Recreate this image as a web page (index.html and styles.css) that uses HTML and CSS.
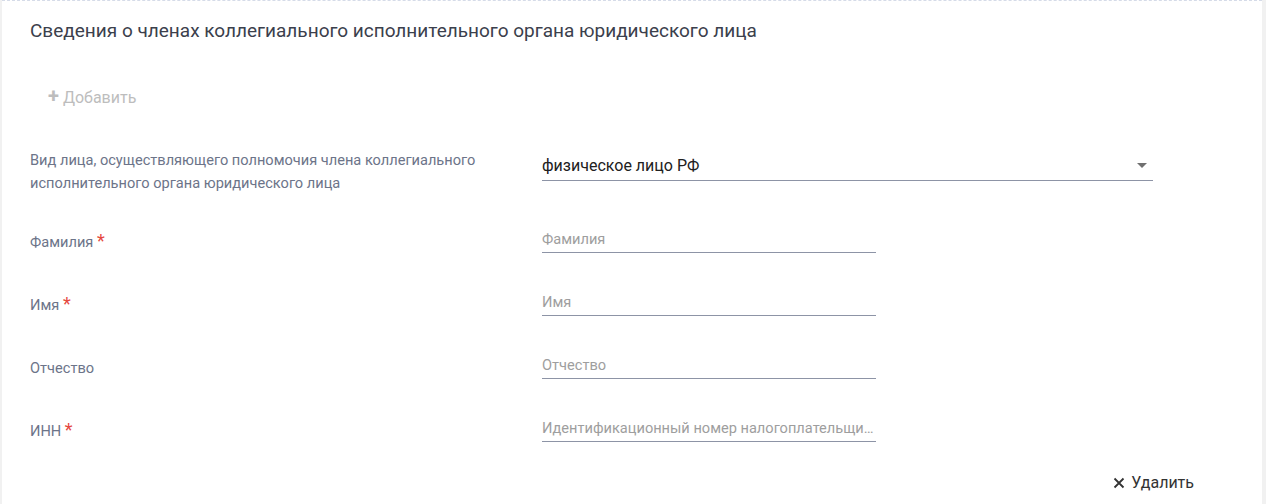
FILE: index.html
```html
<!DOCTYPE html>
<html lang="ru">

<head>
    <meta charset="UTF-8">
    <meta name="viewport" content="width=device-width, initial-scale=1.0">
    <title>Сведения о членах</title>
    <link rel="stylesheet" href="styles.css">
</head>

<body>
    <div class="card">
        <h2 class="title">Сведения о членах коллегиального исполнительного органа юридического лица</h2>

        <div class="add"><span class="add-plus">+</span> Добавить</div>

        <div class="form">
            <div class="row row-first">
                <div class="label">Вид лица, осуществляющего полномочия члена коллегиального исполнительного органа юридического лица</div>
                <div class="field select">
                    <span class="value">физическое лицо РФ</span>
                    <span class="arrow"></span>
                </div>
            </div>
            <div class="row">
                <div class="label">Фамилия <span class="req">*</span></div>
                <div class="field input"><span class="ph">Фамилия</span></div>
            </div>
            <div class="row">
                <div class="label">Имя <span class="req">*</span></div>
                <div class="field input"><span class="ph">Имя</span></div>
            </div>
            <div class="row">
                <div class="label">Отчество</div>
                <div class="field input"><span class="ph">Отчество</span></div>
            </div>
            <div class="row">
                <div class="label">ИНН <span class="req">*</span></div>
                <div class="field input"><span class="ph">Идентификационный номер налогоплательщика физического лица</span></div>
            </div>
        </div>

        <div class="footer">
            <div class="remove">
                <svg class="remove-x" width="12" height="12" viewBox="0 0 12 12"><path d="M1.5 1.5L10.5 10.5M10.5 1.5L1.5 10.5" stroke="#333" stroke-width="1.8" fill="none"/></svg>
                Удалить
            </div>
        </div>
    </div>
</body>

</html>
```

FILE: styles.css
```css
* {
    padding: 0;
    margin: 0;
    box-sizing: border-box;
}

body {
    background: #f1f1f1;
    font-family: Roboto, "Liberation Sans", Arial, sans-serif;
    padding-left: 2px;
    padding-right: 4px;
}

.card {
    background: #fff;
    border-top: 1px dashed #d5dbe8;
    height: 504px;
    padding: 18px 0 0 28px;
}

.title {
    font-size: 19px;
    font-weight: 400;
    line-height: 24px;
    color: #3b404c;
}

.add {
    margin-top: 43px;
    padding-left: 18px;
    font-size: 16px;
    line-height: 20px;
    color: #bdbdbd;
}

.add-plus {
    font-weight: 700;
    font-size: 20px;
}

.form {
    margin-top: 40px;
}

.row {
    display: flex;
    align-items: center;
    height: 63px;
}

.row-first {
    height: 47px;
    margin-bottom: 16px;
}

.label {
    width: 512px;
    padding-right: 30px;
    font-size: 14.6px;
    line-height: 23px;
    color: #6c7489;
}

.req {
    color: #e5483f;
    font-size: 18px;
    line-height: 16px;
}

.field {
    display: flex;
    align-items: center;
    border-bottom: 1px solid #8d94a6;
    font-size: 14.6px;
    line-height: 22px;
    padding-bottom: 2px;
}

.select {
    width: 611px;
    color: #212121;
    font-size: 16px;
    padding-bottom: 3px;
    margin-top: -8px;
}

.value {
    flex: 1;
}

.arrow {
    width: 0;
    height: 0;
    border-left: 5px solid transparent;
    border-right: 5px solid transparent;
    border-top: 5px solid #707070;
    margin-right: 6px;
}

.input {
    width: 334px;
    margin-top: -4px;
}

.ph {
    color: #9e9e9e;
    white-space: nowrap;
    overflow: hidden;
    text-overflow: ellipsis;
}

.footer {
    display: flex;
    justify-content: flex-end;
    padding-right: 68px;
    margin-top: 10px;
}

.remove {
    display: flex;
    align-items: center;
    gap: 6px;
    font-size: 16px;
    line-height: 20px;
    color: #333;
}
```
